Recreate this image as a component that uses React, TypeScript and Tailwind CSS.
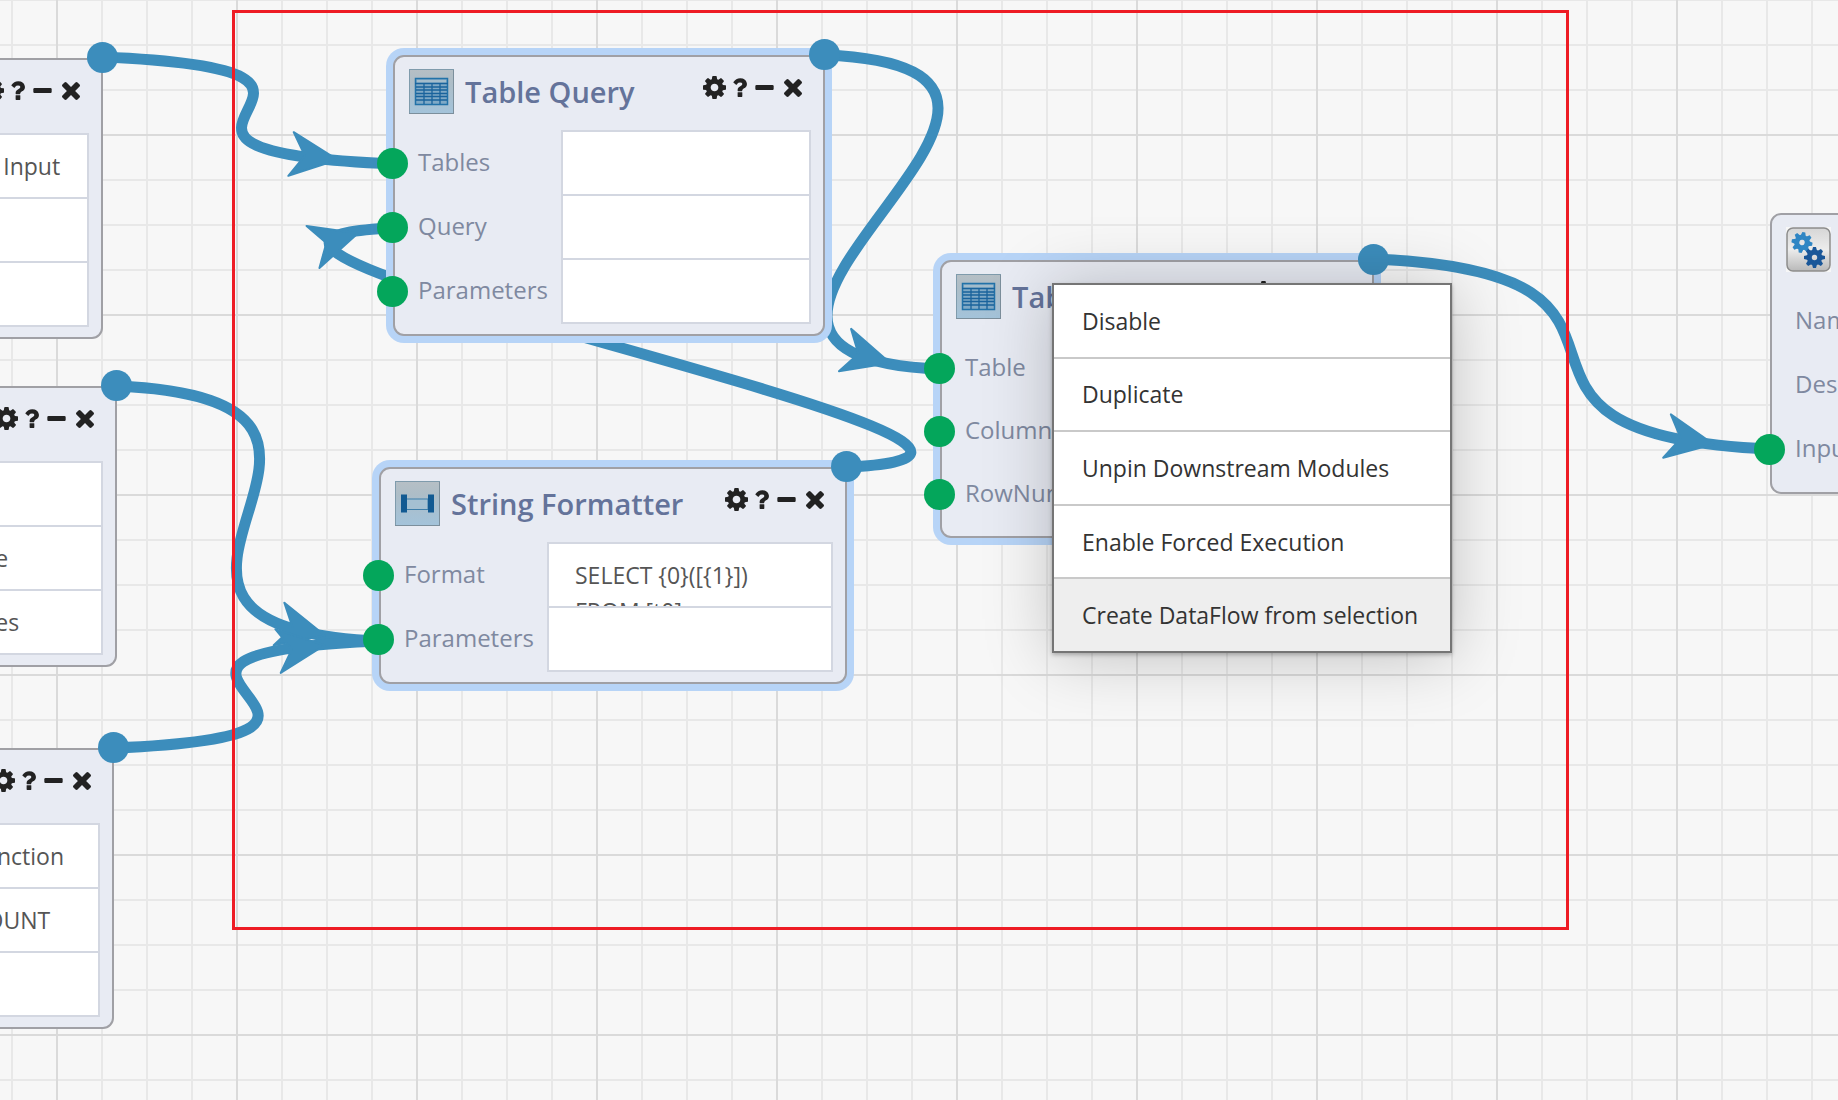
import type { ReactNode } from "react";

/* ---------- toolbar glyphs ---------- */

const CogGlyph = () => (
  <svg viewBox="128 128 1536 1536" className="h-[23px] w-[23px]" fill="currentColor" aria-hidden="true">
    <path d="M1152 896q0-106-75-181t-181-75-181 75-75 181 75 181 181 75 181-75 75-181zm512-109v222q0 12-8 23t-20 13l-185 28q-19 54-39 91 35 50 107 138 10 12 10 25t-9 23q-27 37-99 108t-94 71q-12 0-26-9l-138-108q-44 23-91 38-16 136-29 186-7 28-36 28h-222q-14 0-24.5-8.5t-11.5-21.5l-28-184q-49-16-90-37l-141 107q-10 9-25 9-14 0-25-11-126-114-165-168-7-10-7-23 0-12 8-23 15-21 51-66.5t54-70.5q-27-50-41-99l-183-27q-13-2-21-12.5t-8-23.5v-222q0-12 8-23t19-13l186-28q14-46 39-92-40-57-107-138-10-12-10-24 0-10 9-23 26-36 98.5-107.5t94.5-71.5q13 0 26 10l138 107q44-23 91-38 16-136 29-186 7-28 36-28h222q14 0 24.5 8.5t11.5 21.5l28 184q49 16 90 37l142-107q9-9 24-9 13 0 25 10 129 119 165 170 7 8 7 22 0 12-8 23-15 21-51 66.5t-54 70.5q26 50 41 98l183 28q13 2 21 12.5t8 23.5z" />
  </svg>
);

const QuestionGlyph = () => (
  <svg viewBox="384 256 1024 1280" className="h-[19px] w-[15px]" fill="currentColor" aria-hidden="true">
    <path d="M1088 1256v240q0 16-12 28t-28 12h-240q-16 0-28-12t-12-28v-240q0-16 12-28t28-12h240q16 0 28 12t12 28zm316-600q0 54-15.5 101t-35 76.5-55 59.5-57.5 43.5-61 35.5q-41 23-68.5 65t-27.5 67q0 17-12 32.5t-28 15.5h-240q-15 0-25.5-18.5t-10.5-37.5v-45q0-83 65-156.5t143-108.5q59-27 84-56t25-76q0-42-46.5-74t-107.5-32q-65 0-108 29-35 25-107 115-13 16-31 16-12 0-25-8l-164-125q-13-10-15.5-25t5.5-28q160-266 464-266 80 0 161 31t146 83 106 127.5 41 158.5z" />
  </svg>
);

const MinusGlyph = () => (
  <svg viewBox="192 640 1408 384" className="h-[5px] w-[19px]" fill="currentColor" aria-hidden="true">
    <path d="M1600 736v192q0 40-28 68t-68 28h-1216q-40 0-68-28t-28-68v-192q0-40 28-68t68-28h1216q40 0 68 28t28 68z" />
  </svg>
);

const TimesGlyph = () => (
  <svg viewBox="302 366 1188 1188" className="h-[18px] w-[18px]" fill="currentColor" aria-hidden="true">
    <path d="M1490 1322q0 40-28 68l-136 136q-28 28-68 28t-68-28l-294-294-294 294q-28 28-68 28t-68-28l-136-136q-28-28-28-68t28-68l294-294-294-294q-28-28-28-68t28-68l136-136q28-28 68-28t68 28l294 294 294-294q28-28 68-28t68 28l136 136q28 28 28 68t-28 68l-294 294 294 294q28 28 28 68z" />
  </svg>
);

/* ---------- module icons ---------- */

const Tile = ({ id, children }: { id: string; children: ReactNode }) => (
  <svg viewBox="0 0 45 45" className="size-[45px] shrink-0" aria-hidden="true">
    <defs>
      <linearGradient id={id} x1="0" y1="0" x2="0" y2="1">
        <stop offset="0" stopColor="#b6bfc5" />
        <stop offset="0.3" stopColor="#adbdc7" />
        <stop offset="1" stopColor="#a3c3da" />
      </linearGradient>
    </defs>
    <rect x="0.5" y="0.5" width="44" height="44" fill={`url(#${id})`} stroke="#7f9bac" />
    <path d="M0 44.5h45M44.5 1v44" stroke="#7c8f9c" />
    {children}
  </svg>
);

const TableIcon = ({ id }: { id: string }) => (
  <Tile id={id}>
    <rect x="6.5" y="9.500" width="32" height="26" fill="#7fa9c6" stroke="#2272a8" strokeWidth="1.500" />
    <rect x="8" y="11" width="29" height="2.500" fill="#a3bccb" />
    <path
      d="M6 14.500h33M7 18h31M7 21h31M7 24.500h31M7 27.500h31M7 31h31M15 14v21M23 14v21M31 14v21"
      stroke="#1a639c"
      strokeWidth="1.300"
      fill="none"
    />
  </Tile>
);

const StringIcon = ({ id }: { id: string }) => (
  <Tile id={id}>
    <rect x="11" y="18" width="22" height="10.500" fill="#a4c0d2" stroke="#3d7eaa" />
    <rect x="6" y="13.500" width="6" height="18" fill="#125a92" />
    <rect x="33" y="13.500" width="6" height="18" fill="#125a92" />
  </Tile>
);

const teeth = [0, 45, 90, 135, 180, 225, 270, 315];

const Gear = ({ x, y, turn, fill }: { x: number; y: number; turn: number; fill: string }) => (
  <g transform={`translate(${x} ${y}) rotate(${turn})`}>
    {teeth.map((a) => (
      <path key={a} d="M-2.600 -6.500L-1.500 -10.500H1.500L2.600 -6.500Z" transform={`rotate(${a})`} fill={fill} />
    ))}
    <circle r="5.200" fill="none" stroke={fill} strokeWidth="5" />
  </g>
);

const GearsIcon = () => (
  <svg viewBox="0 0 45 45" className="size-[45px] shrink-0" aria-hidden="true">
    <defs>
      <linearGradient id="gears-tile" x1="0" y1="0" x2="0" y2="1">
        <stop offset="0" stopColor="#d6d6d6" />
        <stop offset="0.5" stopColor="#ececec" />
        <stop offset="1" stopColor="#b9b9b9" />
      </linearGradient>
    </defs>
    <rect width="45" height="45" fill="#f7f7f7" />
    <rect x="1" y="1" width="43" height="43" rx="6" fill="url(#gears-tile)" stroke="#8c8c8c" strokeWidth="1.500" />
    <Gear x={16} y={15.5} turn={10} fill="#2f86c4" />
    <Gear x={28.5} y={30.5} turn={0} fill="#1a5799" />
  </svg>
);

/* ---------- modules ---------- */

type Field = { label: string; value?: string; port?: boolean };

type ModuleProps = {
  name: string;
  place: string;
  cells: string;
  icon?: ReactNode;
  title?: string;
  selected?: boolean;
  compact?: boolean;
  output?: boolean;
  fields: Field[];
};

const tool = "flex h-[23px] items-center justify-center";

function Module({ name, place, cells, icon, title, selected, compact, output = true, fields }: ModuleProps) {
  return (
    <section
      aria-label={name}
      className={`absolute rounded-[11px] border-2 border-[#a0a0a5] bg-[#e8ebf3] pb-3 ${place} ${
        selected ? "shadow-[0_0_0_7px_#b7d4f7]" : ""
      }`}
    >
      <header className="flex h-[73px] items-start pt-3 pr-[21px] pl-3.5">
        {icon}
        <h2 className="ml-[11px] text-[29px] leading-[46px] font-semibold whitespace-nowrap text-[#64739a]">{title}</h2>
        <div className="mt-[7px] ml-auto flex gap-1.5 text-[#222]">
          <button type="button" aria-label="Settings" className={tool}>
            <CogGlyph />
          </button>
          <button type="button" aria-label="Help" className={`${tool} pr-px`}>
            <QuestionGlyph />
          </button>
          <button type="button" aria-label="Minimize" className={`${tool} px-px`}>
            <MinusGlyph />
          </button>
          <button type="button" aria-label="Close" className={`${tool} pl-[3px]`}>
            <TimesGlyph />
          </button>
        </div>
      </header>

      {fields.map((field, i) => {
        const id = `${name}-${i}`.replace(/\s/g, "-");
        return (
          <div key={id} className={`relative flex items-center pr-3 ${compact ? "h-[63px]" : "h-16"}`}>
            {field.port && (
              <span className="absolute top-[18px] -left-[18px] size-[31px] rounded-full bg-[#04a65b]" />
            )}
            <label htmlFor={id} className="pl-[23px] text-[24px] leading-8 whitespace-nowrap text-[#7f89a0]">
              {field.label}
            </label>
            <textarea
              id={id}
              defaultValue={field.value}
              className={`-mb-0.5 ml-auto block h-[66px] shrink-0 resize-none overflow-hidden border-2 border-[#d3d7e1] bg-white pt-[13px] pl-[26px] text-[23px] leading-9 text-[#555] outline-none ${cells}`}
            />
          </div>
        );
      })}

      {output && <span className="absolute -top-[18px] -right-[17px] size-[31px] rounded-full bg-[#3c8dbc]" />}
    </section>
  );
}

/* ---------- connections ---------- */

type Link = { from: [number, number]; to: [number, number]; arrow: [number, number, number] };

const links: Link[] = [
  { from: [102, 57], to: [393, 164], arrow: [291, 154, 7] },
  { from: [116, 386], to: [380, 641], arrow: [279, 624, 14] },
  { from: [114, 748], to: [380, 641], arrow: [278, 651, -7] },
  { from: [825, 55], to: [940, 369], arrow: [845, 350, 16] },
  { from: [847, 467], to: [393, 228], arrow: [313, 247, -17] },
  { from: [1374, 259], to: [1770, 449], arrow: [1667, 436, 10] },
];

const REACH = 338;
const LEAN = 14;

function curve({ from: [x1, y1], to: [x2, y2] }: Link) {
  const lean = y2 > y1 ? LEAN : -LEAN;
  return `M${x1} ${y1}C${x1 + REACH} ${y1 + lean} ${x2 - REACH} ${y2 - lean} ${x2} ${y2}`;
}

const Connections = () => (
  <svg className="absolute inset-0 size-full" aria-hidden="true">
    {links.map((link) => (
      <g key={curve(link)}>
        <path d={curve(link)} fill="none" stroke="#3c8dbc" strokeWidth="11" />
        <path
          d="M0 -22L47 0L0 22L14 0Z"
          transform={`translate(${link.arrow[0]} ${link.arrow[1]}) rotate(${link.arrow[2]})`}
          fill="#3c8dbc"
          stroke="#3c8dbc"
          strokeWidth="2"
          strokeLinejoin="round"
        />
      </g>
    ))}
  </svg>
);

/* ---------- context menu ---------- */

const actions = [
  "Disable",
  "Duplicate",
  "Unpin Downstream Modules",
  "Enable Forced Execution",
  "Create DataFlow from selection",
];

const ContextMenu = () => (
  <ul
    role="menu"
    className="absolute top-[283px] left-[1052px] flex h-[370px] w-[400px] flex-col divide-y-2 divide-[#c9c9c9] border-2 border-[#757575] bg-white shadow-[0_2px_4px_rgba(0,0,0,0.25),0_4px_64px_rgba(0,0,0,0.22)]"
  >
    {actions.map((action) => (
      <li key={action} role="none" className="flex flex-1">
        <button
          type="button"
          role="menuitem"
          className="w-full pl-7 text-left text-[23px] leading-8 whitespace-nowrap text-[#333] in-[li:last-child]:bg-[#eee] hover:bg-[#eee]"
        >
          {action}
        </button>
      </li>
    ))}
  </ul>
);

/* ---------- page ---------- */

export default function App() {
  return (
    <main className="relative h-screen w-full overflow-hidden bg-[#f7f7f7] bg-[linear-gradient(to_right,#dadada_2px,transparent_2px),linear-gradient(to_bottom,#dadada_2px,transparent_2px),linear-gradient(to_right,#e8e8e8_2px,transparent_2px),linear-gradient(to_bottom,#e8e8e8_2px,transparent_2px)] bg-[size:180px_180px,180px_180px,45px_45px,45px_45px] bg-[position:56px_0px,0px_134px,11px_0px,0px_44px] font-['Open_Sans',sans-serif]">
      <Connections />

      <Module
        name="Input module"
        place="top-[58px] -left-[220px] w-[323px]"
        cells="w-[178px]"
        fields={[{ label: "", value: "Table Input" }, { label: "" }, { label: "" }]}
      />
      <Module
        name="Table module"
        place="top-[386px] -left-[220px] w-[337px]"
        cells="w-[181px]"
        fields={[{ label: "" }, { label: "", value: "Table" }, { label: "", value: "Tables" }]}
      />
      <Module
        name="Function module"
        place="top-[748px] -left-[220px] w-[334px]"
        cells="w-[157px]"
        fields={[{ label: "", value: "Function" }, { label: "", value: "COUNT" }, { label: "" }]}
      />
      <Module
        name="Table Query"
        title="Table Query"
        icon={<TableIcon id="tile-query" />}
        selected
        place="top-[55px] left-[393px] w-[432px]"
        cells="w-[250px]"
        fields={[
          { label: "Tables", port: true },
          { label: "Query", port: true },
          { label: "Parameters", port: true },
        ]}
      />
      <Module
        name="String Formatter"
        title="String Formatter"
        icon={<StringIcon id="tile-string" />}
        selected
        place="top-[467px] left-[379px] w-[468px]"
        cells="w-[286px]"
        fields={[
          { label: "Format", value: "SELECT {0}([{1}])\nFROM [t0]", port: true },
          { label: "Parameters", port: true },
        ]}
      />
      <Module
        name="Table"
        title="Table"
        icon={<TableIcon id="tile-table" />}
        selected
        compact
        place="top-[260px] left-[940px] w-[434px]"
        cells="w-[250px]"
        fields={[
          { label: "Table", port: true },
          { label: "Columns", port: true },
          { label: "RowNumber", port: true },
        ]}
      />
      <Module
        name="Output"
        icon={<GearsIcon />}
        output={false}
        place="top-[213px] left-[1770px] w-[433px]"
        cells="w-[240px]"
        fields={[{ label: "Name" }, { label: "Description" }, { label: "Input", port: true }]}
      />

      <div className="pointer-events-none absolute top-[10px] left-[232px] h-[920px] w-[1337px] border-3 border-[#ee1c25]" />
      <ContextMenu />
    </main>
  );
}
